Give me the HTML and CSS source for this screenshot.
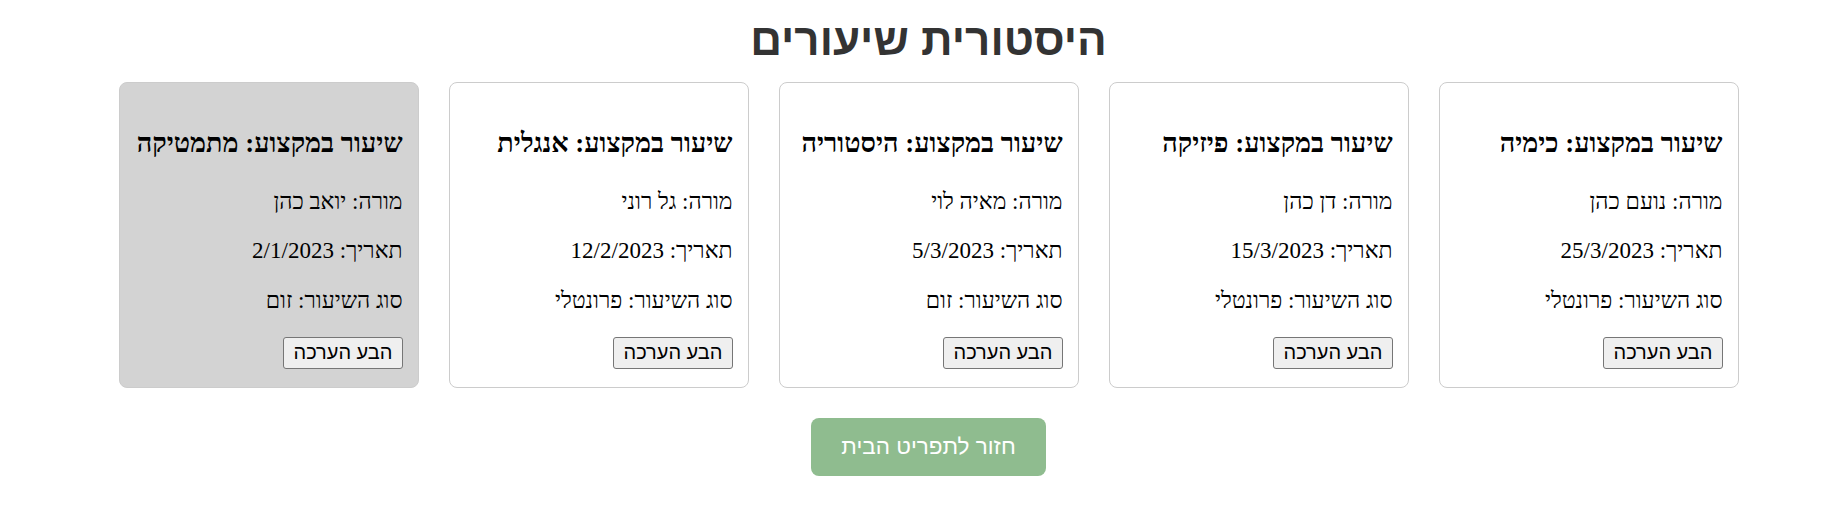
FILE: index.html
```html
<!DOCTYPE html>
<html lang="he" dir="rtl">
<head>
<meta charset="utf-8">
<title>היסטורית שיעורים</title>
<link rel="stylesheet" href="styles.css">
</head>
<body>
<div class="page">
  <h1 class="title">היסטורית שיעורים</h1>
  <div class="cards">
    <div class="card">
      <h3 class="card-title">שיעור במקצוע: כימיה</h3>
      <p class="card-line">מורה: נועם כהן</p>
      <p class="card-line">תאריך: 25/3/2023</p>
      <p class="card-line">סוג השיעור: פרונטלי</p>
      <button class="rate-btn">הבע הערכה</button>
    </div>
    <div class="card">
      <h3 class="card-title">שיעור במקצוע: פיזיקה</h3>
      <p class="card-line">מורה: דן כהן</p>
      <p class="card-line">תאריך: 15/3/2023</p>
      <p class="card-line">סוג השיעור: פרונטלי</p>
      <button class="rate-btn">הבע הערכה</button>
    </div>
    <div class="card">
      <h3 class="card-title">שיעור במקצוע: היסטוריה</h3>
      <p class="card-line">מורה: מאיה לוי</p>
      <p class="card-line">תאריך: 5/3/2023</p>
      <p class="card-line">סוג השיעור: זום</p>
      <button class="rate-btn">הבע הערכה</button>
    </div>
    <div class="card">
      <h3 class="card-title">שיעור במקצוע: אנגלית</h3>
      <p class="card-line">מורה: גל רוני</p>
      <p class="card-line">תאריך: 12/2/2023</p>
      <p class="card-line">סוג השיעור: פרונטלי</p>
      <button class="rate-btn">הבע הערכה</button>
    </div>
    <div class="card card-past">
      <h3 class="card-title">שיעור במקצוע: מתמטיקה</h3>
      <p class="card-line">מורה: יואב כהן</p>
      <p class="card-line">תאריך: 2/1/2023</p>
      <p class="card-line">סוג השיעור: זום</p>
      <button class="rate-btn">הבע הערכה</button>
    </div>
  </div>
  <div class="actions">
    <button class="home-btn">חזור לתפריט הבית</button>
  </div>
</div>
</body>
</html>
```

FILE: styles.css
```css
html, body {
  margin: 0;
  padding: 0;
  background: #ffffff;
}

body {
  font-family: "Liberation Serif", "DejaVu Serif", serif;
  color: #000;
}

.page {
  padding: 15px 0 12px 24px;
}

.title {
  font-family: "Liberation Sans", Arial, sans-serif;
  font-size: 44px;
  font-weight: bold;
  color: #333333;
  text-align: center;
  margin: 0 0 16px 0;
  line-height: 1.15;
}

.cards {
  display: flex;
  justify-content: center;
  gap: 30px;
}

.card {
  box-sizing: border-box;
  width: 300px;
  padding: 15px 15px 18px;
  border: 1px solid #cccccc;
  border-radius: 8px;
  background: #ffffff;
  text-align: right;
}

.card-past {
  background: #d3d3d3;
}

.card-title {
  font-size: 27px;
  font-weight: bold;
  margin: 30px 0 30px;
  line-height: 1.15;
  white-space: nowrap;
}

.card-line {
  font-size: 23px;
  margin: 23px 0;
  line-height: 1.15;
}

.rate-btn {
  font-family: "Liberation Sans", Arial, sans-serif;
  font-size: 20px;
  height: 32px;
  padding: 0 9px;
  background: #efefef;
  color: #000;
  border: 1px solid #767676;
  border-radius: 3px;
}

.actions {
  display: flex;
  justify-content: center;
  margin-top: 30px;
}

.home-btn {
  font-family: "Liberation Sans", Arial, sans-serif;
  font-size: 22.5px;
  line-height: 28px;
  padding: 15px 30px;
  background: #8fbc8f;
  color: #ffffff;
  border: none;
  border-radius: 8px;
}
```
